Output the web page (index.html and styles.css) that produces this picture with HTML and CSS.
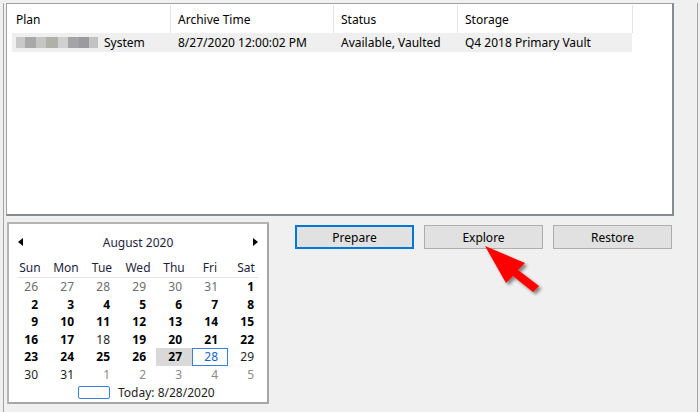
FILE: index.html
```html
<!DOCTYPE html>
<html>
<head>
<meta charset="utf-8">
<link rel="stylesheet" href="styles.css">
</head>
<body>
<div class="frame">
  <div class="listview">
    <div class="lv-header">
      <div class="hcol c1">Plan</div>
      <div class="hcol c2">Archive Time</div>
      <div class="hcol c3">Status</div>
      <div class="hcol c4">Storage</div>
    </div>
    <div class="lv-row">
      <div class="cell c1"><span class="blur"><i class="b1"></i><i class="b2"></i><i class="b3"></i><i class="b4"></i><i class="b5"></i><i class="b6"></i><i class="b7"></i><i class="b8"></i></span>System</div>
      <div class="cell c2">8/27/2020 12:00:02 PM</div>
      <div class="cell c3">Available, Vaulted</div>
      <div class="cell c4">Q4 2018 Primary Vault</div>
    </div>
  </div>
  <div class="lower">
    <div class="calendar">
      <div class="cal-title">
        <span class="tri-left"></span>
        <span class="month">August 2020</span>
        <span class="tri-right"></span>
      </div>
      <div class="cal-days">
        <span>Sun</span><span>Mon</span><span>Tue</span><span>Wed</span><span>Thu</span><span>Fri</span><span>Sat</span>
      </div>
      <div class="cal-sep"></div>
      <div class="cal-grid">
        <span class="prev">26</span><span class="prev">27</span><span class="prev">28</span><span class="prev">29</span><span class="prev">30</span><span class="prev">31</span><span class="b">1</span>
        <span class="b">2</span><span class="b">3</span><span class="b">4</span><span class="b">5</span><span class="b">6</span><span class="b">7</span><span class="b">8</span>
        <span class="b">9</span><span class="b">10</span><span class="b">11</span><span class="b">12</span><span class="b">13</span><span class="b">14</span><span class="b">15</span>
        <span class="b">16</span><span class="b">17</span><span>18</span><span class="b">19</span><span class="b">20</span><span class="b">21</span><span class="b">22</span>
        <span class="b">23</span><span class="b">24</span><span class="b">25</span><span class="b">26</span><span class="b sel">27</span><span class="today">28</span><span>29</span>
        <span>30</span><span>31</span><span class="next">1</span><span class="next">2</span><span class="next">3</span><span class="next">4</span><span class="next">5</span>
      </div>
      <div class="cal-today">
        <span class="today-box"></span>
        <span>Today: 8/28/2020</span>
      </div>
    </div>
    <div class="buttons">
      <button class="btn default">Prepare</button>
      <button class="btn">Explore</button>
      <button class="btn">Restore</button>
    </div>
  </div>
</div>
<svg class="pointer" width="80" height="70" viewBox="0 0 80 70">
  <defs>
    <filter id="sh" x="-20%" y="-20%" width="150%" height="150%">
      <feDropShadow dx="2.5" dy="2.5" stdDeviation="1.5" flood-color="#000" flood-opacity="0.45"/>
    </filter>
  </defs>
  <polygon filter="url(#sh)" fill="#ff0000" points="5,6 45,23 38,30 59,46 53,52 33,36 26,43"/>
</svg>
</body>
</html>
```

FILE: styles.css
```css
* { box-sizing: border-box; }
html, body { margin: 0; padding: 0; }
body {
  background: #f0f0f0;
  font-family: "Noto Sans", "Open Sans", sans-serif;
  font-size: 12px;
  color: #000;
  width: 700px;
  height: 412px;
  overflow: hidden;
  position: relative;
}
.frame {
  margin-left: 3px;
  width: 695px;
  height: 412px;
  border-left: 1px solid #a3a3a3;
  border-right: 1px solid #a3a3a3;
  padding-left: 2px;
}
.listview {
  margin-top: 3px;
  width: 668px;
  height: 213px;
  background: #fff;
  border-top: 1px solid #a0a0a0;
  border-left: 1px solid #a0a0a0;
  border-right: 2px solid #868a91;
  border-bottom: 2px solid #868a91;
}
.lv-header {
  display: flex;
  height: 29px;
  padding-top: 1px;
}
.hcol {
  border-right: 1px solid #e5e5e5;
  line-height: 28px;
  padding-top: 1px;
  padding-left: 7px;
  white-space: nowrap;
}
.hcol.c1 { width: 164px; padding-left: 9px; }
.hcol.c2 { width: 163px; }
.hcol.c3 { width: 124px; }
.hcol.c4 { width: 175px; }
.lv-row {
  display: flex;
  margin-left: 5px;
  width: 620px;
  height: 19px;
  background: #efefef;
  line-height: 20px;
  white-space: nowrap;
}
.cell { padding-left: 7px; }
.cell.c1 { width: 159px; padding-left: 4px; display: flex; align-items: center; }
.cell.c2 { width: 163px; }
.cell.c3 { width: 124px; }
.cell.c4 { width: 174px; }
.blur { display: flex; height: 11px; margin-right: 6px; }
.blur i { display: block; height: 11px; }
.blur .b1 { width: 9px; background: #c9c9c9; }
.blur .b2 { width: 11px; background: #a9a9a9; }
.blur .b3 { width: 10px; background: #c4c6c4; }
.blur .b4 { width: 12px; background: #b0b0a9; }
.blur .b5 { width: 10px; background: #d0d0d0; }
.blur .b6 { width: 11px; background: #a4a4a8; }
.blur .b7 { width: 10px; background: #9a9a9f; }
.blur .b8 { width: 9px; background: #c2c2c2; }

.lower {
  display: flex;
  align-items: flex-start;
}
.calendar {
  margin-top: 6px;
  margin-left: 1px;
  width: 262px;
  height: 182px;
  background: #fff;
  border: 2px solid #a6a6a6;
  border-top-color: #b4b4b4;
  border-left-color: #b4b4b4;
  padding-left: 1px;
  padding-top: 8px;
}
.cal-title {
  margin-left: 2px;
  width: 252px;
  height: 20px;
  display: flex;
  align-items: center;
  justify-content: space-between;
  padding: 0 6px;
  color: #1e1e3c;
}
.tri-left {
  width: 0; height: 0;
  border-top: 4px solid transparent;
  border-bottom: 4px solid transparent;
  border-right: 5px solid #000;
}
.tri-right {
  width: 0; height: 0;
  border-top: 4px solid transparent;
  border-bottom: 4px solid transparent;
  border-left: 5px solid #000;
}
.cal-days {
  margin-top: 6px;
  margin-left: 2px;
  display: grid;
  grid-template-columns: repeat(7, 36px);
  height: 19px;
  line-height: 19px;
  text-align: center;
  color: #1e1e3c;
}
.cal-sep {
  margin-left: 8px;
  width: 241px;
  height: 1px;
  background: #e3e3e3;
}
.cal-grid {
  margin-left: 2px;
  display: grid;
  grid-template-columns: repeat(7, 36px);
  grid-auto-rows: 17.5px;
  line-height: 17px;
  color: #1e1e1e;
}
.cal-grid span {
  text-align: right;
  padding-right: 10px;
}
.cal-grid .b { font-weight: bold; color: #000; }
.cal-grid .prev { color: #6d6d6d; }
.cal-grid .next { color: #8a8a8a; }
.cal-grid .sel { background: #d9d9d9; }
.cal-grid .today { color: #1565c8; border: 1px solid #3a7fdc; line-height: 15px; padding-right: 9px; }
.cal-today {
  display: flex;
  align-items: center;
  height: 18px;
  padding-left: 68px;
  color: #1e1e1e;
}
.today-box {
  width: 32px;
  height: 13px;
  border: 1px solid #3a7fdc;
  border-radius: 2px;
  margin-right: 8px;
}
.buttons {
  margin-top: 9px;
  margin-left: 26px;
  display: flex;
  gap: 10px;
}
.btn {
  width: 119px;
  height: 24px;
  background: #e1e1e1;
  border: 1px solid #adadad;
  font-family: "Noto Sans", "Open Sans", sans-serif;
  font-size: 12px;
  color: #000;
  padding: 0;
  margin: 0;
}
.btn.default { border: 2px solid #0078d7; }
.pointer {
  position: absolute;
  left: 480px;
  top: 240px;
}
```
